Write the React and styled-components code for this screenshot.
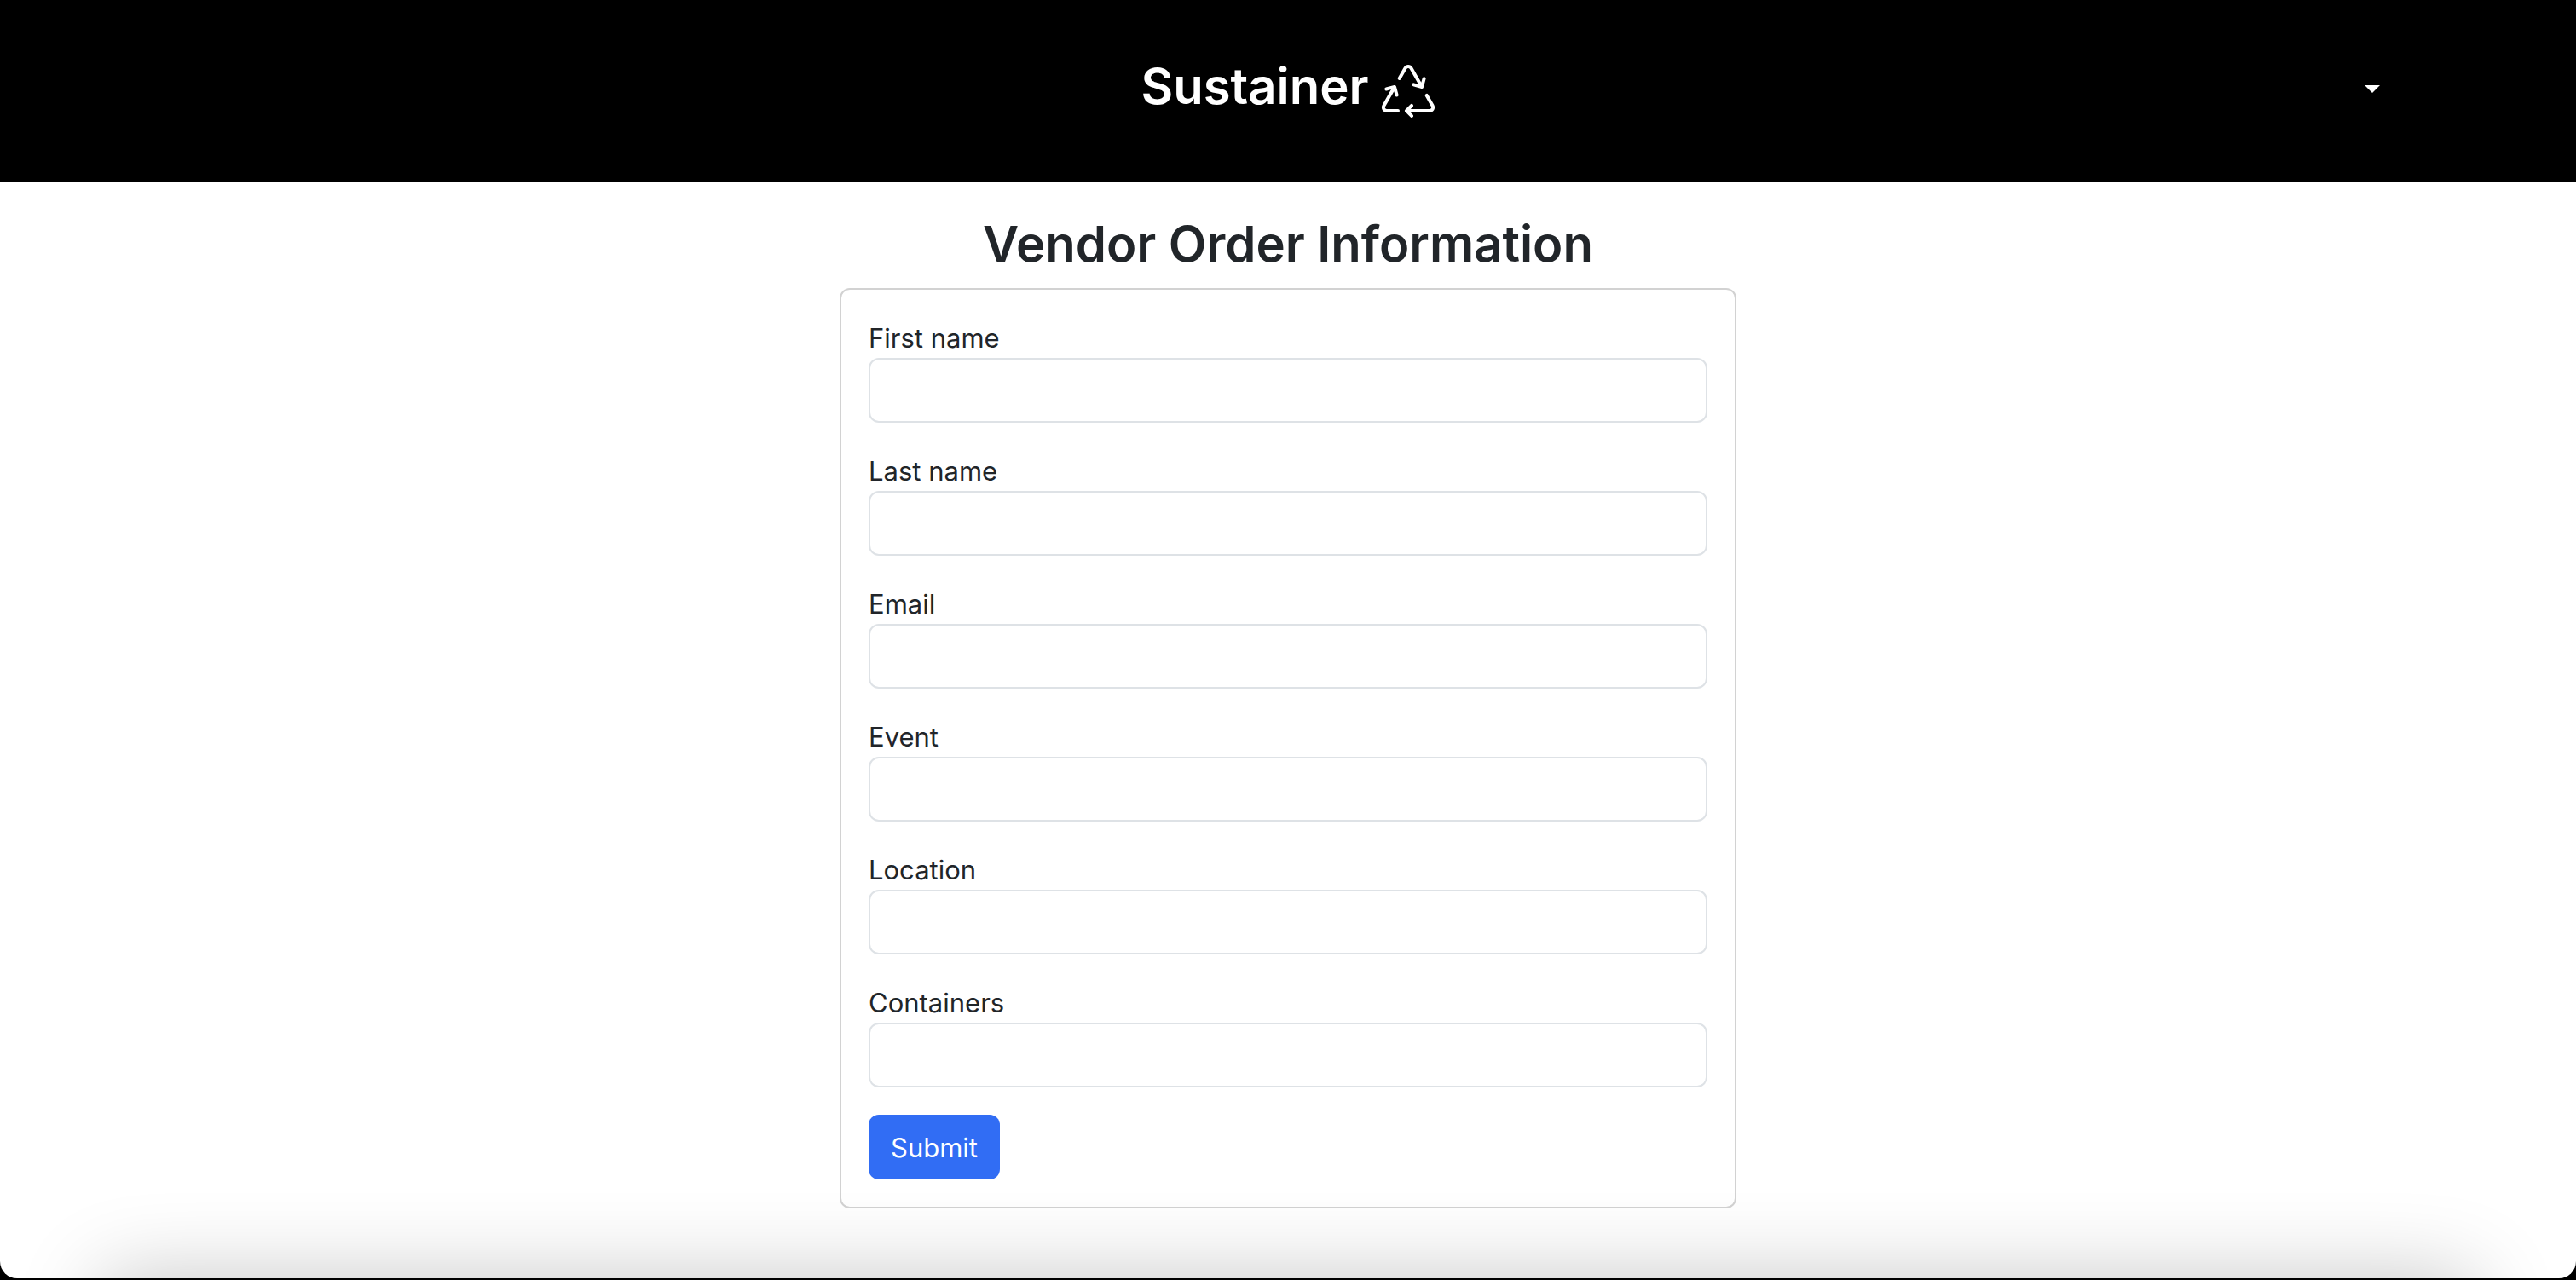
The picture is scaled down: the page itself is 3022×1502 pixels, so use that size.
import React from "react";
import styled, { createGlobalStyle } from "styled-components";
import { BsRecycle } from "react-icons/bs";

const GlobalStyle = createGlobalStyle`
  *, *::before, *::after {
    box-sizing: border-box;
  }
  body {
    margin: 0;
    background: #000;
    color: #212529;
    font-family: Inter, "Liberation Sans", sans-serif;
    font-size: 31px;
    line-height: 48px;
  }
`;

const Window = styled.div`
  position: relative;
  display: flex;
  flex-direction: column;
  min-height: calc(100vh - 2px);
  overflow: hidden;
  border-radius: 0 0 20px 20px;
  background: #fff;

  &::after {
    content: "";
    position: absolute;
    right: 120px;
    bottom: -200px;
    left: 120px;
    height: 200px;
    box-shadow: 0 0 100px rgba(0, 0, 0, 0.23);
    pointer-events: none;
  }
`;

const Header = styled.header`
  display: grid;
  grid-template-columns: 1fr auto 1fr;
  align-items: center;
  height: 214px;
  padding: 0 230px 6px;
  background: #000;
  color: #fff;
`;

const Heading = styled.h2`
  margin: 0;
  font-size: 58px;
  font-weight: 600;
  line-height: 76px;
`;

const Brand = styled(Heading)`
  display: flex;
  grid-column: 2;
  gap: 14px;
  align-items: center;
  padding-bottom: 6px;
`;

const BrandIcon = styled(BsRecycle)`
  width: 64px;
  height: 64px;
  margin-top: 10px;
`;

const MenuToggle = styled.button`
  justify-self: end;
  padding: 0;
  border: 0;
  background: none;
  color: inherit;

  &::after {
    content: "";
    display: block;
    border-top: 9px solid;
    border-right: 9px solid transparent;
    border-left: 9px solid transparent;
  }
`;

const Main = styled.main`
  display: flex;
  flex-direction: column;
  align-items: center;
  padding: 34px 32px 80px;
`;

const Title = styled(Heading)`
  margin-bottom: 14px;
`;

const Card = styled.form`
  display: flex;
  flex-direction: column;
  gap: 32px;
  align-items: flex-start;
  width: 100%;
  max-width: 1052px;
  padding: 32px;
  border: 2px solid #d2d2d2;
  border-radius: 12px;
`;

const Field = styled.div`
  display: flex;
  flex-direction: column;
  width: 100%;
`;

const Label = styled.label`
  padding-top: 2px;
  line-height: 46px;
`;

const Input = styled.input`
  height: 76px;
  padding: 12px 24px;
  border: 2px solid #dee2e6;
  border-radius: 12px;
  background: transparent;
  color: inherit;
  font: inherit;
`;

const SubmitButton = styled.button`
  height: 76px;
  padding: 2px 26px 0;
  border: 0;
  border-radius: 12px;
  background: #316df4;
  color: #fff;
  font: inherit;
`;

const fields = [
  { id: "first-name", label: "First name", type: "text" },
  { id: "last-name", label: "Last name", type: "text" },
  { id: "email", label: "Email", type: "email" },
  { id: "event", label: "Event", type: "text" },
  { id: "location", label: "Location", type: "text" },
  { id: "containers", label: "Containers", type: "text" },
];

export default function App() {
  return (
    <Window>
      <GlobalStyle />
      <Header>
        <Brand>
          Sustainer
          <BrandIcon aria-hidden="true" />
        </Brand>
        <MenuToggle type="button" aria-haspopup="menu" aria-label="Menu" />
      </Header>
      <Main>
        <Title>Vendor Order Information</Title>
        <Card onSubmit={(event) => event.preventDefault()}>
          {fields.map(({ id, label, type }) => (
            <Field key={id}>
              <Label htmlFor={id}>{label}</Label>
              <Input id={id} name={id} type={type} />
            </Field>
          ))}
          <SubmitButton type="submit">Submit</SubmitButton>
        </Card>
      </Main>
    </Window>
  );
}
